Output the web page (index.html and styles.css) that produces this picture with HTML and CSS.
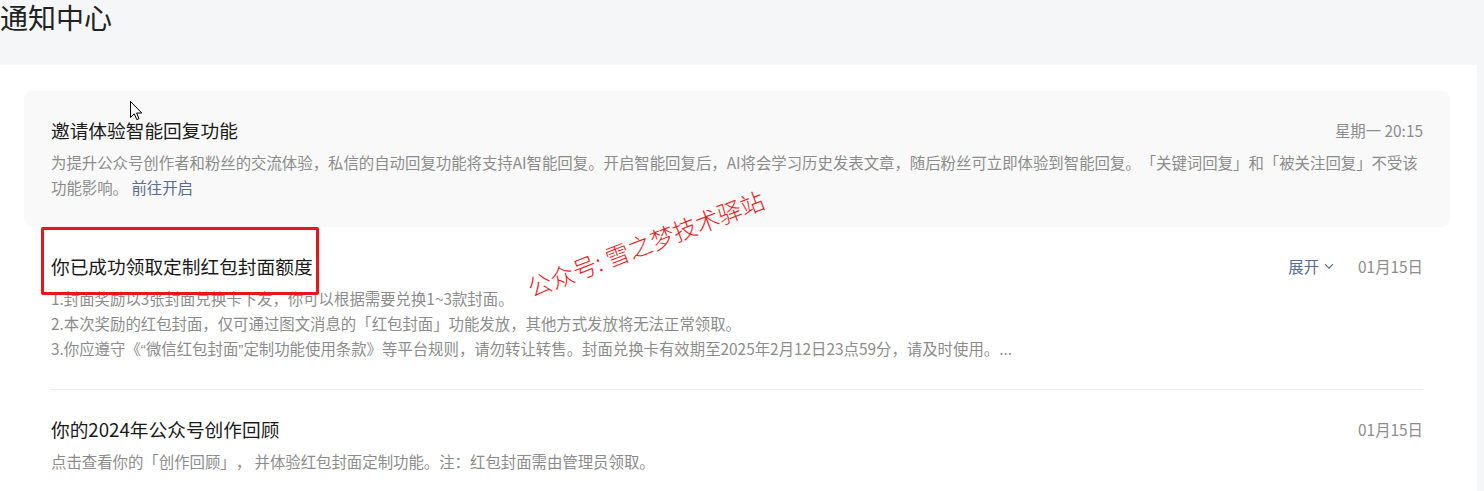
FILE: index.html
```html
<!DOCTYPE html>
<html lang="zh-CN">
<head>
<meta charset="utf-8">
<title>通知中心</title>
<link rel="stylesheet" href="styles.css">
</head>
<body>
<header class="header">
  <h1 class="page-title">通知中心</h1>
</header>
<main class="panel">
  <ul class="list">
    <li class="item item-active">
      <div class="item-inner">
        <div class="row">
          <h2 class="title">邀请体验智能回复功能</h2>
          <div class="meta"><span class="time">星期一 20:15</span></div>
        </div>
        <p class="desc">为提升公众号创作者和粉丝的交流体验，私信的自动回复功能将支持AI智能回复。开启智能回复后，AI将会学习历史发表文章，随后粉丝可立即体验到智能回复。「关键词回复」和「被关注回复」不受该功能影响。 <a class="link">前往开启</a></p>
      </div>
    </li>
    <li class="item">
      <div class="highlight-box"></div>
      <div class="item-inner">
        <div class="row">
          <h2 class="title">你已成功领取定制红包封面额度</h2>
          <div class="meta">
            <a class="link expand">展开<svg class="chev" width="10" height="7" viewBox="0 0 10 7"><polyline points="1,1.2 5,5.2 9,1.2" fill="none" stroke="#576b95" stroke-width="1.2"/></svg></a>
            <span class="time">01月15日</span>
          </div>
        </div>
        <p class="desc">1.封面奖励以3张封面兑换卡下发，你可以根据需要兑换1~3款封面。<br>2.本次奖励的红包封面，仅可通过图文消息的「红包封面」功能发放，其他方式发放将无法正常领取。<br>3.你应遵守《<span class="q">“</span>微信红包封面<span class="q">”</span>定制功能使用条款》等平台规则，请勿转让转售。封面兑换卡有效期至2025年2月12日23点59分，请及时使用。...</p>
      </div>
    </li>
    <li class="item">
      <div class="item-inner">
        <div class="row">
          <h2 class="title">你的2024年公众号创作回顾</h2>
          <div class="meta"><span class="time">01月15日</span></div>
        </div>
        <p class="desc">点击查看你的「创作回顾」， 并体验红包封面定制功能。注：红包封面需由管理员领取。</p>
      </div>
    </li>
  </ul>
</main>
<div class="watermark">公众号: 雪之梦技术驿站</div>
<svg class="cursor" width="13" height="20" viewBox="0 0 13 20"><path d="M0.5 0.5 L0.5 16.5 L4.3 12.8 L6.8 18.6 L9 17.7 L6.6 12 L11.8 12 Z" fill="#fff" stroke="#000" stroke-width="1" stroke-linejoin="miter"/></svg>
</body>
</html>
```
FILE: styles.css
```css
html, body {
  margin: 0;
  padding: 0;
}
body {
  background: #f5f6f8;
  font-family: "Noto Sans CJK SC", "Noto Sans", sans-serif;
  text-spacing-trim: space-all;
  width: 1484px;
  height: 491px;
  overflow: hidden;
  position: relative;
}
.header {
  height: 65px;
}
.page-title {
  margin: 0;
  font-size: 28px;
  line-height: 34px;
  font-weight: 400;
  color: #222;
}
.panel {
  width: 1477px;
  background: #fff;
  padding: 26px 0 0 24px;
  box-sizing: border-box;
  height: 426px;
}
.list {
  list-style: none;
  margin: 0;
  padding: 0;
  width: 1426px;
}
.item {
  position: relative;
  padding: 0 27px;
  border-radius: 8px;
}
.item-active {
  background: #f9f9f9;
}
.item-inner {
  padding: 27px 0;
  border-bottom: 1px solid #ececec;
}
.item-active .item-inner {
  border-bottom: none;
}
.row {
  display: flex;
  justify-content: space-between;
  align-items: center;
  height: 24px;
}
.title {
  margin: 0;
  font-size: 18.7px;
  line-height: 24px;
  font-weight: 400;
  color: #1a1a1a;
}
.meta {
  display: flex;
  align-items: center;
  gap: 24px;
  font-size: 15.4px;
  line-height: 24px;
}
.time {
  color: #8c8c8c;
}
.link {
  color: #576b95;
  text-decoration: none;
}
.expand {
  display: flex;
  align-items: center;
  gap: 5px;
}
.chev {
  display: block;
}
.desc {
  margin: 8px 0 0;
  font-size: 15.4px;
  line-height: 25px;
  color: #8c8c8c;
}
.q {
  font-family: "Liberation Sans", sans-serif;
}
.highlight-box {
  position: absolute;
  left: 17px;
  top: 0;
  width: 278px;
  height: 68px;
  box-sizing: border-box;
  border: 3px solid #e5161c;
  border-radius: 2px;
}
.watermark {
  position: absolute;
  left: 520px;
  top: 229px;
  width: 248px;
  font-size: 24px;
  line-height: 30px;
  font-weight: 300;
  white-space: nowrap;
  color: #ea1d27;
  transform: rotate(-21deg);
  transform-origin: 50% 50%;
}
.cursor {
  position: absolute;
  left: 130px;
  top: 101px;
}
```
